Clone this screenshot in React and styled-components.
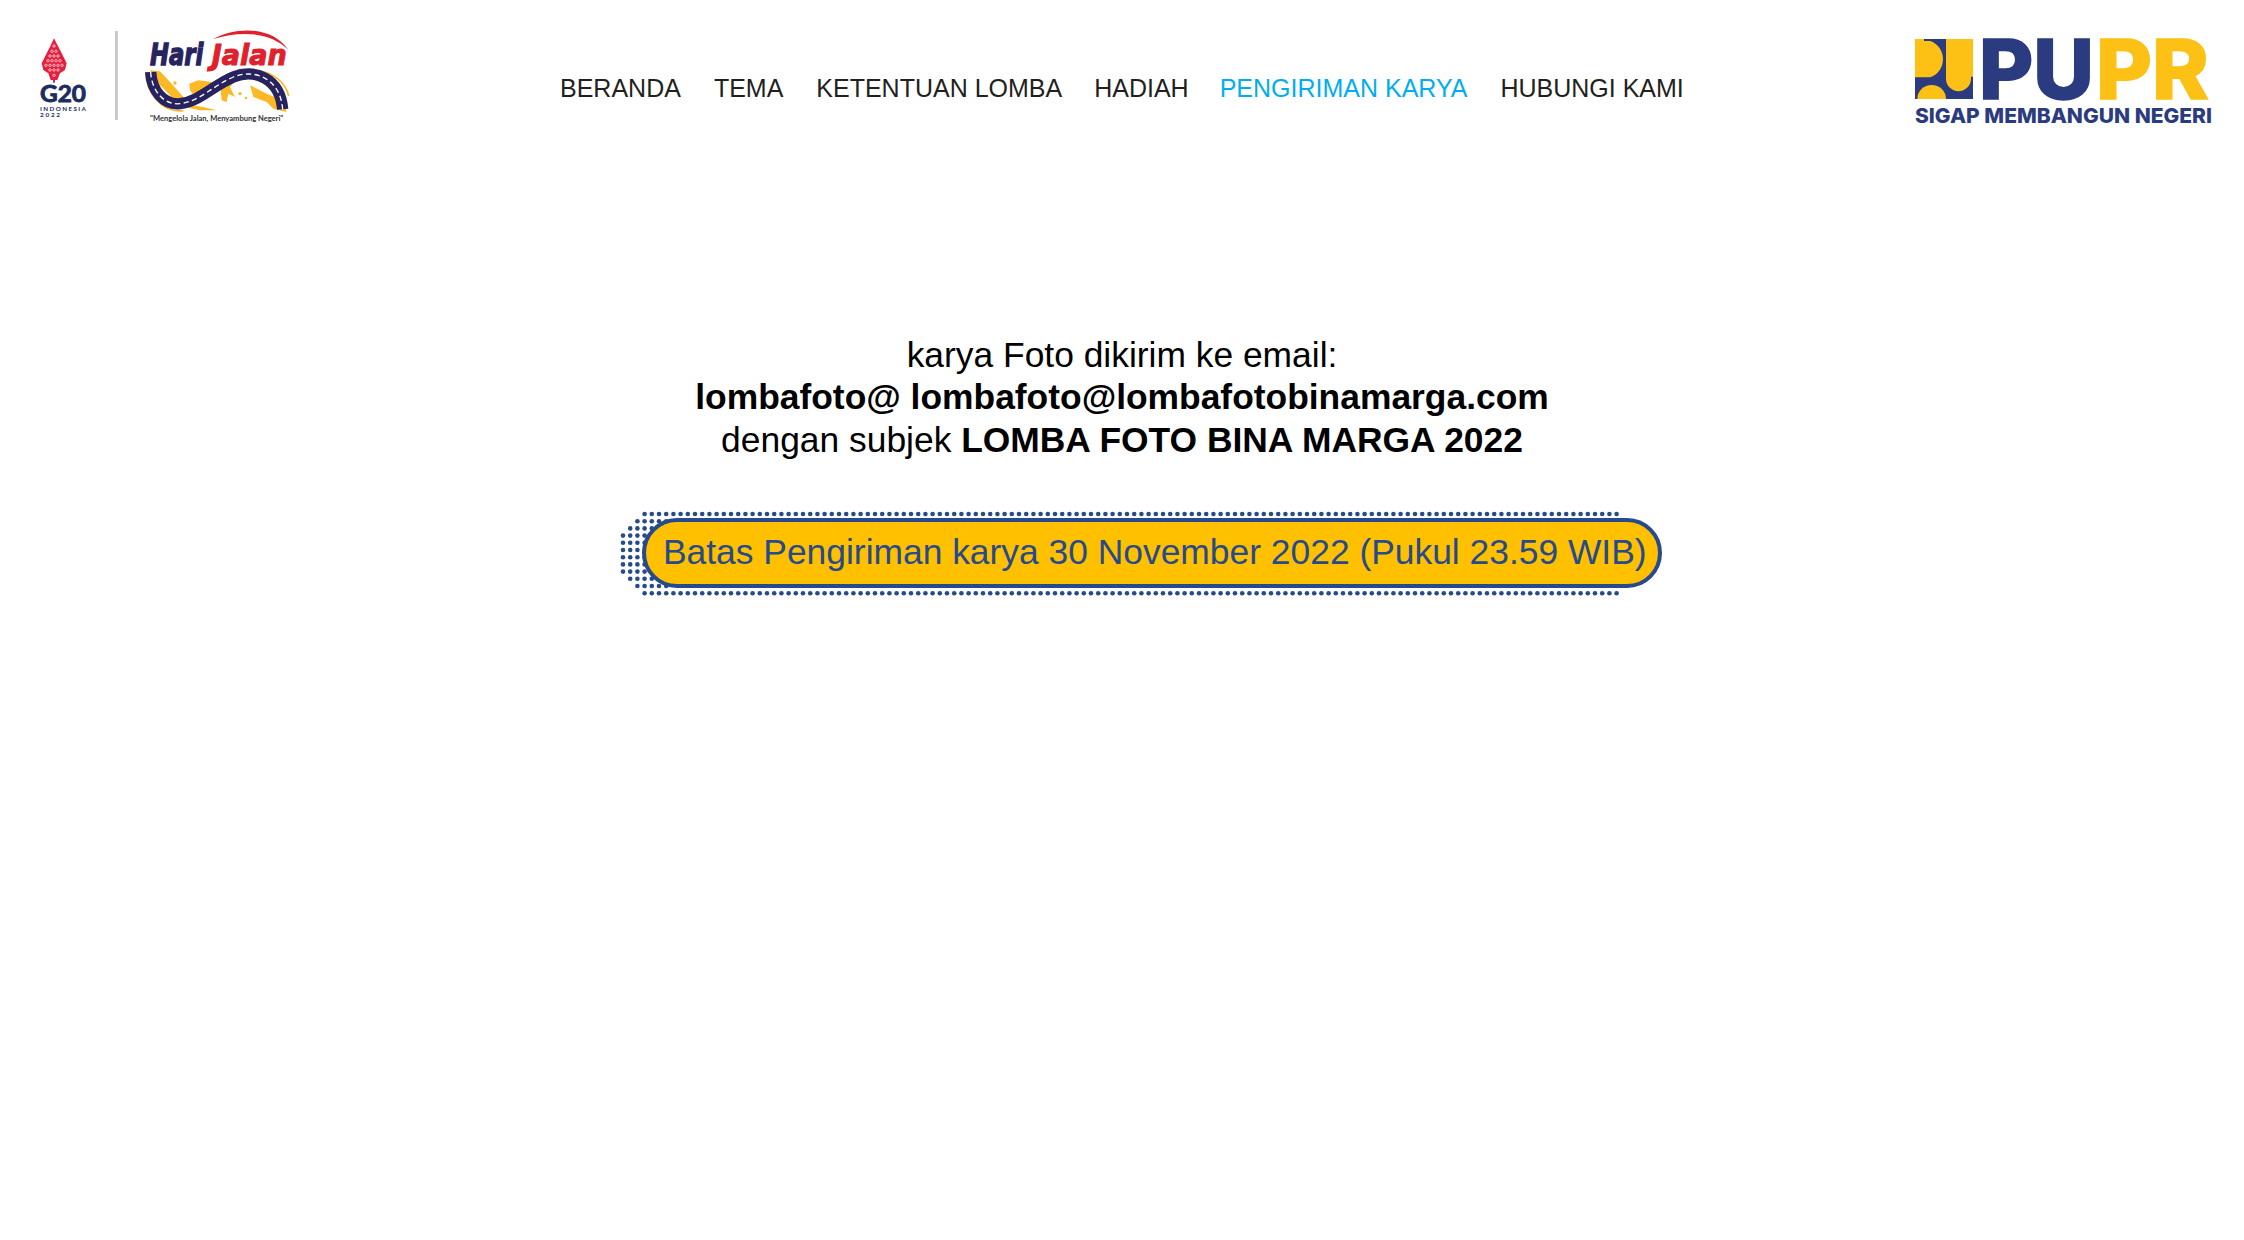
import React from 'react';
import styled, {createGlobalStyle} from 'styled-components';

const GlobalStyle = createGlobalStyle`
  html, body {
    margin: 0;
    padding: 0;
    background: #fff;
    font-family: "Liberation Sans", Arial, sans-serif;
  }
`;

const Page = styled.div`
  width: 2244px;
  height: 1240px;
  overflow: hidden;
  background: #fff;
`;
const Header = styled.header`
  box-sizing: border-box;
  height: 140px;
  display: flex;
  align-items: flex-start;
  padding: 22px 24px 0 38px;
`;
const Brand = styled.div`
  display: flex;
  align-items: flex-start;
`;
const G20Svg = styled.svg`
  margin-top: 14px;
`;
const Divider = styled.div`
  width: 3px;
  height: 89px;
  margin: 9px 22px 0 25px;
  background: #c9c9c9;
`;
const PuprSvg = styled.svg`
  margin-top: -12px;
`;
const Nav = styled.nav`
  display: flex;
  flex: 1;
  padding: 50px 0 0 265px;
`;
const NavLink = styled.a`
  font-size: 25px;
  line-height: 32px;
  margin-right: ${props => props.$gap}px;
  color: ${props => (props.$active ? '#00aeef' : '#231f20')};
`;
const Message = styled.div`
  margin-top: 194px;
  text-align: center;
  font-size: 35.4px;
  line-height: 42.3px;
  color: #000;
`;
const Strong = styled.b`
  font-weight: bold;
`;
const BannerWrap = styled.div`
  position: relative;
  width: 1020px;
  height: 70px;
  margin: 57px 0 0 642px;
`;
const Dots = styled.svg`
  position: absolute;
  left: -22px;
  top: -7px;
`;
const Pill = styled.div`
  position: relative;
  box-sizing: border-box;
  width: 100%;
  height: 100%;
  border: 4px solid #264a8c;
  border-radius: 35px;
  background: #ffc000;
  color: #264a8c;
  font-size: 35.4px;
  line-height: 60px;
  padding-left: 17px;
  white-space: nowrap;
`;

const navItems = [
  {label: 'BERANDA', gap: 33},
  {label: 'TEMA', gap: 33},
  {label: 'KETENTUAN LOMBA', gap: 32},
  {label: 'HADIAH', gap: 31},
  {label: 'PENGIRIMAN KARYA', gap: 33, active: true},
  {label: 'HUBUNGI KAMI', gap: 0},
];

const ornamentRows = [
  [[72, 48]],
  [[66, 64], [78, 64]],
  [[60, 78], [72, 78], [84, 78]],
  [[54, 92], [66, 92], [78, 92], [90, 92]],
  [[48, 106], [60, 106], [72, 106], [84, 106], [96, 106]],
  [[60, 120], [72, 120], [84, 120]],
  [[72, 136]],
];

function G20Logo() {
  return (
    <G20Svg width="52" height="84" viewBox="0 0 52 84">
      <g transform="translate(-8 -6) scale(0.3333)">
        <path d="M72 25 L85 50 L95 70 L110 100 L105 120 L90 130 L82 150 L62 150 L55 130 L40 120 L35 100 L50 70 L60 50 Z" fill="#e5203f"/>
        <rect x="69" y="148" width="6" height="10" fill="#e5203f"/>
        {ornamentRows.flat().map(([cx, cy]) => (
          <circle key={cx + '-' + cy} cx={cx} cy={cy} r="3.6" fill="#e5203f" stroke="#fbd5da" strokeWidth="2.6"/>
        ))}
        <text x="30" y="217" fontFamily="Lato, sans-serif" fontSize="66" fontWeight="700" fill="#1d2c5e" stroke="#1d2c5e" strokeWidth="2.5" textLength="138" lengthAdjust="spacingAndGlyphs">G20</text>
        <text x="30" y="243" fontFamily="Lato, sans-serif" fontSize="19" fontWeight="700" fill="#1d2c5e" textLength="138">INDONESIA</text>
        <text x="30" y="262" fontFamily="Lato, sans-serif" fontSize="19" fontWeight="700" fill="#1d2c5e" textLength="60">2022</text>
      </g>
    </G20Svg>
  );
}

function HariJalanLogo() {
  return (
    <svg width="155" height="108" viewBox="0 0 465 324">
      <path d="M219 51 C285 15 395 9 445 84 C390 27 300 27 219 51 Z" fill="#e0202c"/>
      <g fill="#fdb825">
        <path d="M30 145 L60 148 L95 185 L130 225 L125 240 L95 225 L60 190 Z"/>
        <path d="M148 185 L175 175 L215 180 L225 205 L200 225 L165 225 L150 205 Z"/>
        <path d="M240 185 L285 178 L270 195 L285 225 L265 215 L260 240 L245 235 Z"/>
        <path d="M330 190 L380 215 L430 235 L440 270 L400 260 L380 240 L340 225 Z"/>
        <path d="M120 243 L190 255 L230 265 L180 265 L130 255 Z"/>
        <circle cx="105" cy="183" r="5"/><circle cx="300" cy="215" r="5"/><circle cx="318" cy="228" r="4"/>
      </g>
      <path d="M17 150 C20 220 70 272 130 266" fill="none" stroke="#fdb825" strokeWidth="5"/>
      <path d="M240 172 C300 125 425 135 446 222" fill="none" stroke="#fdb825" strokeWidth="5"/>
      <path d="M32 150 C35 205 70 250 120 245 C180 238 220 190 280 165 C340 140 420 165 428 262" fill="none" stroke="#26235f" strokeWidth="34"/>
      <path d="M32 150 C35 205 70 250 120 245 C180 238 220 190 280 165 C340 140 420 165 428 262" fill="none" stroke="#fff" strokeWidth="4" strokeDasharray="16 10"/>
      <text x="30" y="128" fontFamily="DejaVu Sans, sans-serif" fontSize="88" fontWeight="700" fontStyle="italic" fill="#26235f" stroke="#26235f" strokeWidth="4" textLength="160" lengthAdjust="spacingAndGlyphs">Hari</text>
      <text x="215" y="128" fontFamily="DejaVu Sans, sans-serif" fontSize="84" fontWeight="700" fontStyle="italic" fill="#e0202c" stroke="#e0202c" strokeWidth="3" textLength="225" lengthAdjust="spacingAndGlyphs">Jalan</text>
      <text x="30" y="298" fontFamily="Lato, sans-serif" fontSize="20" fontWeight="700" fill="#333" textLength="400" lengthAdjust="spacingAndGlyphs">"Mengelola Jalan, Menyambung Negeri"</text>
    </svg>
  );
}

function PuprLogo() {
  return (
    <PuprSvg width="310" height="120" viewBox="0 -20 310 120">
      <g transform="scale(0.3333)">
        <rect x="15" y="27" width="174" height="180" fill="#2a3b80"/>
        <path d="M15 27 H42 V33 H60 A55 57 0 0 1 60 142 H15 Z" fill="#fdc014"/>
        <path d="M108 27 H189 V140 H183 V146 A37.5 37.5 0 0 1 108 146 Z" fill="#fdc014"/>
        <path d="M22 207 A43 42 0 0 1 108 207 Z" fill="#fdc014"/>
      </g>
      <text x="69" y="69" fontFamily="Inter, sans-serif" fontSize="82" fontWeight="800" fill="#2a3b80" stroke="#2a3b80" strokeWidth="1.5" textLength="115" lengthAdjust="spacingAndGlyphs">PU</text>
      <text x="186" y="69" fontFamily="Inter, sans-serif" fontSize="82" fontWeight="800" fill="#fdc014" stroke="#fdc014" strokeWidth="1.5" textLength="113" lengthAdjust="spacingAndGlyphs">PR</text>
      <text x="5" y="93" fontFamily="Inter, sans-serif" fontSize="20.6" fontWeight="800" fill="#2a3b80" textLength="297" lengthAdjust="spacingAndGlyphs">SIGAP MEMBANGUN NEGERI</text>
    </PuprSvg>
  );
}

function BannerDots() {
  const dots = [];
  for (let row = 0; row < 12; row++) {
    const edge = Math.abs(row - 5.5);
    const start = edge > 5 ? 3 : edge > 4 ? 2 : edge > 3 ? 1 : 0;
    for (let col = start; col < 139; col++) {
      if (col > 6 && row > 0 && row < 11) continue;
      dots.push(<circle key={row + '-' + col} cx={3 + col * 7.2} cy={3 + row * 7.2} r="2.3"/>);
    }
  }
  return (
    <Dots width="1030" height="86" viewBox="0 0 1030 86" fill="#264a8c">{dots}</Dots>
  );
}

export default function App() {
  return (
    <Page>
      <GlobalStyle/>
      <Header>
        <Brand>
          <G20Logo/>
          <Divider/>
          <HariJalanLogo/>
        </Brand>
        <Nav>
          {navItems.map(item => (
            <NavLink key={item.label} $gap={item.gap} $active={item.active}>{item.label}</NavLink>
          ))}
        </Nav>
        <PuprLogo/>
      </Header>
      <Message>
        karya Foto dikirim ke email:<br/>
        <Strong>lombafoto@ lombafoto@lombafotobinamarga.com</Strong><br/>
        dengan subjek <Strong>LOMBA FOTO BINA MARGA 2022</Strong>
      </Message>
      <BannerWrap>
        <BannerDots/>
        <Pill>Batas Pengiriman karya 30 November 2022 (Pukul 23.59 WIB)</Pill>
      </BannerWrap>
    </Page>
  );
}
